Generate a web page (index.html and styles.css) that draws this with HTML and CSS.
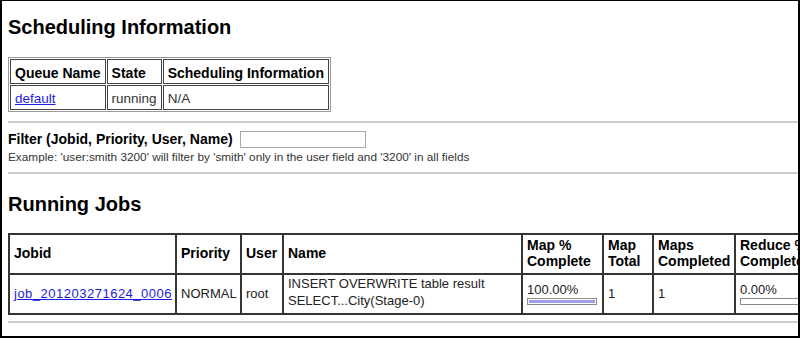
FILE: index.html
```html
<!DOCTYPE html>
<html>
<head>
<meta charset="utf-8">
<title>Hadoop Map/Reduce Administration</title>
<link rel="stylesheet" href="styles.css">
</head>
<body>
<div class="frame">
  <div class="page">
    <h1 class="title">Scheduling Information</h1>
    <table class="queue">
      <thead>
        <tr><th>Queue Name</th><th>State</th><th>Scheduling Information</th></tr>
      </thead>
      <tbody>
        <tr><td><a href="#">default</a></td><td>running</td><td>N/A</td></tr>
      </tbody>
    </table>
    <hr class="rule rule-1">
    <div class="filter">
      <label class="filter-label" for="filter">Filter (Jobid, Priority, User, Name)</label>
      <input class="filter-input" id="filter" type="text">
    </div>
    <p class="example">Example: 'user:smith 3200' will filter by 'smith' only in the user field and '3200' in all fields</p>
    <hr class="rule rule-2">
    <h1 class="title title-jobs">Running Jobs</h1>
    <table class="jobs">
      <thead>
        <tr>
          <th class="c-jobid">Jobid</th>
          <th class="c-priority">Priority</th>
          <th class="c-user">User</th>
          <th class="c-name">Name</th>
          <th class="c-mappct">Map %<br>Complete</th>
          <th class="c-maptotal">Map<br>Total</th>
          <th class="c-mapsdone">Maps<br>Completed</th>
          <th class="c-redpct">Reduce %<br>Complete</th>
        </tr>
      </thead>
      <tbody>
        <tr>
          <td><a class="joblink" href="#">job_201203271624_0006</a></td>
          <td>NORMAL</td>
          <td>root</td>
          <td class="name">INSERT OVERWRITE table result<br>SELECT...City(Stage-0)</td>
          <td><div class="pct">100.00%</div><div class="bar"><div class="fill" style="width:100%"></div></div></td>
          <td>1</td>
          <td>1</td>
          <td><div class="pct">0.00%</div><div class="bar"><div class="fill" style="width:0%"></div></div></td>
        </tr>
      </tbody>
    </table>
    <hr class="rule rule-3">
  </div>
</div>
</body>
</html>
```
FILE: styles.css
```css
html, body {
  margin: 0;
  padding: 0;
  background: #fff;
}

body {
  font-family: "Liberation Sans", Arial, sans-serif;
  color: #000;
}

.frame {
  width: 800px;
  height: 338px;
  box-sizing: border-box;
  border-style: solid;
  border-color: #000;
  border-width: 1px 2px 2px 2px;
  overflow: hidden;
}

.page {
  width: 1000px;
  padding-left: 6px;
}

.title {
  margin: 14px 0 0;
  font-size: 20px;
  line-height: 24px;
  font-weight: bold;
}

.title-jobs {
  margin-top: 18px;
}

a {
  color: #1c1ce0;
  text-decoration: underline;
}

/* Queue table */
.queue {
  margin-top: 18px;
  border-collapse: separate;
  border-spacing: 1px;
  border: 1px solid #9a9a9a;
}

.queue tr {
  height: 25px;
}

.queue th,
.queue td {
  border: 1px solid #454545;
  padding: 3px 4px 0;
  text-align: left;
  vertical-align: middle;
}

.queue th {
  font-size: 14px;
  line-height: 16px;
  font-weight: bold;
}

.queue td {
  font-size: 13.5px;
  line-height: 16px;
  color: #333;
}

/* Rules */
.rule {
  border: 0;
  height: 2px;
  background: #cdcdcd;
  margin: 9px 0 0;
}

.rule-2 {
  margin-top: 8px;
}

.rule-3 {
  margin-top: 6px;
}

/* Filter */
.filter {
  display: flex;
  align-items: flex-start;
  gap: 7px;
  margin-top: 8px;
}

.filter-label {
  font-size: 14px;
  line-height: 16px;
  font-weight: bold;
}

.filter-input {
  width: 126px;
  height: 17px;
  box-sizing: border-box;
  border: 1px solid #a9a9a9;
  padding: 0;
  margin: 0;
  background: #fff;
}

.example {
  margin: 3px 0 0;
  font-size: 11.8px;
  line-height: 13px;
  color: #333;
}

/* Jobs table */
.jobs {
  margin-top: 17px;
  border-collapse: separate;
  border-spacing: 0;
  border: 1px solid #353535;
  table-layout: fixed;
  width: 809px;
}

.jobs tr {
  height: 40px;
}

.jobs th,
.jobs td {
  box-sizing: border-box;
  border: 1px solid #353535;
  text-align: left;
  vertical-align: middle;
}

.jobs th {
  font-size: 14px;
  line-height: 16px;
  font-weight: bold;
  padding: 1px 4px 3px;
}

.jobs td {
  font-size: 13px;
  line-height: 17px;
  color: #222;
  padding: 0 4px 2px;
}

.jobs td.name {
  vertical-align: top;
}

.joblink {
  letter-spacing: 0.5px;
}

.c-jobid { width: 167px; }
.c-priority { width: 65px; }
.c-user { width: 42px; }
.c-name { width: 239px; }
.c-mappct { width: 81px; }
.c-maptotal { width: 50px; }
.c-mapsdone { width: 82px; }
.c-redpct { width: 81px; }

.pct {
  line-height: 17px;
}

.bar {
  width: 70px;
  height: 7px;
  box-sizing: border-box;
  border: 1px solid #8a8a8a;
  padding: 1px;
  background: #fff;
}

.fill {
  height: 100%;
  background: #9d9def;
}
```
